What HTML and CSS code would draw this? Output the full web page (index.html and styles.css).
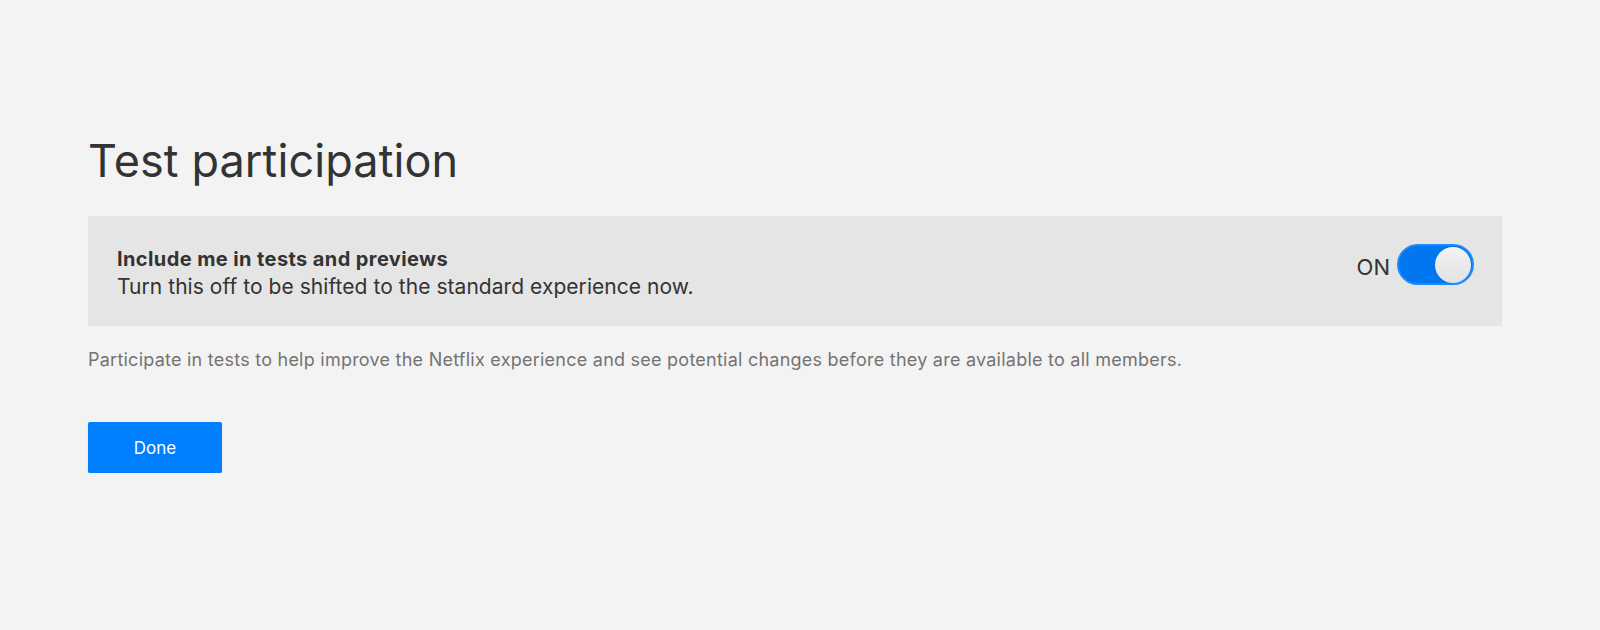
FILE: index.html
```html
<!DOCTYPE html>
<html lang="en">
<head>
<meta charset="utf-8">
<title>Test participation</title>
<link rel="stylesheet" href="styles.css">
</head>
<body>
<main class="page">
  <h1 class="title">Test participation</h1>
  <section class="setting">
    <div class="setting-text">
      <div class="setting-name">Include me in tests and previews</div>
      <div class="setting-desc">Turn this off to be shifted to the standard experience now.</div>
    </div>
    <label class="toggle-wrap">
      <span class="toggle-label">ON</span>
      <span class="toggle"><span class="knob"></span></span>
    </label>
  </section>
  <p class="note">Participate in tests to help improve the Netflix experience and see potential changes before they are available to all members.</p>
  <button class="done">Done</button>
</main>
</body>
</html>
```
FILE: styles.css
```css
html, body {
  margin: 0;
  padding: 0;
  background: #f3f3f3;
}
body {
  font-family: Inter, "Noto Sans", sans-serif;
  color: #333;
}
.page {
  padding: 134px 98px 0 88px;
}
.title {
  margin: 0;
  font-size: 45px;
  line-height: 54px;
  font-weight: 400;
  color: #333;
  letter-spacing: 0.1px;
}
.setting {
  margin-top: 28px;
  height: 110px;
  background: #e5e5e5;
  display: flex;
  align-items: center;
  justify-content: space-between;
  padding: 0 28px 0 29px;
}
.setting-text {
  margin-top: 5px;
}
.setting-name {
  font-size: 20px;
  line-height: 27px;
  font-weight: 700;
  letter-spacing: 0.4px;
}
.setting-desc {
  font-size: 21px;
  line-height: 28px;
  letter-spacing: 0.05px;
}
.toggle-wrap {
  align-self: flex-start;
  margin-top: 28px;
  display: flex;
  align-items: center;
  gap: 7px;
}
.toggle-label {
  font-size: 22px;
  color: #333;
  margin-top: 4px;
}
.toggle {
  width: 77px;
  height: 41px;
  box-sizing: border-box;
  border-radius: 21px;
  background: #0077f0;
  border: 2px solid #1a8cff;
  display: flex;
  align-items: center;
  justify-content: flex-end;
  padding-right: 1px;
}
.knob {
  width: 36px;
  height: 36px;
  border-radius: 50%;
  background: linear-gradient(#f3f3f3, #e2e2e2);
}
.note {
  margin: 22px 0 0 0;
  font-size: 18px;
  line-height: 24px;
  color: #737373;
  letter-spacing: 0.24px;
}
.done {
  display: block;
  margin-top: 50px;
  width: 134px;
  height: 51px;
  border: 0;
  border-radius: 2px;
  background: #0080ff;
  color: #fff;
  font-family: Inter, "Noto Sans", sans-serif;
  font-size: 17px;
  box-shadow: 0 1px 1px rgba(0,0,0,0.25);
  cursor: pointer;
}
```
